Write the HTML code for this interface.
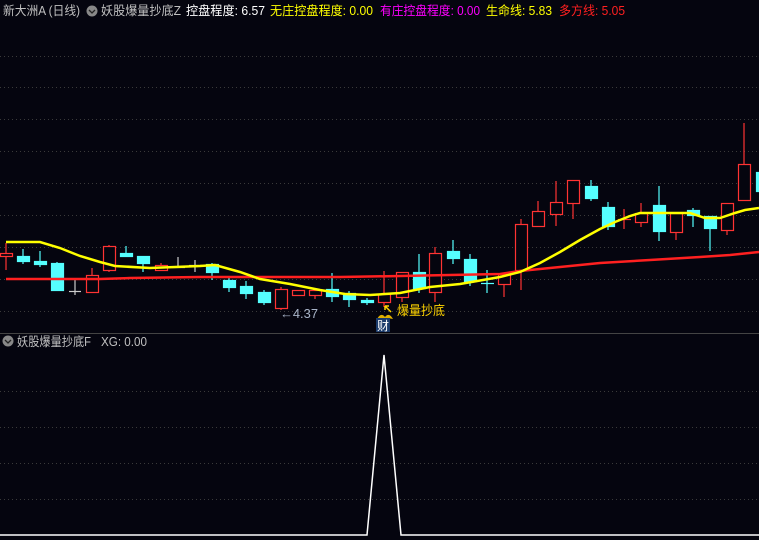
<!DOCTYPE html>
<html><head><meta charset="utf-8"><style>
body{margin:0;background:#05050f;width:759px;height:540px;overflow:hidden;font-family:"Liberation Sans","Noto Sans CJK SC",sans-serif}
svg{display:block}
</style></head><body>
<svg width="759" height="540" xmlns="http://www.w3.org/2000/svg" font-family="Liberation Sans, Noto Sans CJK SC, sans-serif">
<rect width="759" height="540" fill="#05050f"/>
<g stroke="#3a3a3a" stroke-dasharray="1 3" stroke-width="1">
<line x1="0" y1="56.5" x2="759" y2="56.5"/><line x1="0" y1="87.5" x2="759" y2="87.5"/><line x1="0" y1="119.5" x2="759" y2="119.5"/><line x1="0" y1="151.5" x2="759" y2="151.5"/><line x1="0" y1="183.5" x2="759" y2="183.5"/><line x1="0" y1="215.5" x2="759" y2="215.5"/><line x1="0" y1="247.5" x2="759" y2="247.5"/><line x1="0" y1="279.5" x2="759" y2="279.5"/><line x1="0" y1="311.5" x2="759" y2="311.5"/>
<line x1="0" y1="391.5" x2="759" y2="391.5"/><line x1="0" y1="427.5" x2="759" y2="427.5"/><line x1="0" y1="463.5" x2="759" y2="463.5"/><line x1="0" y1="499.5" x2="759" y2="499.5"/>
</g>
<line x1="0" y1="333.5" x2="759" y2="333.5" stroke="#444" stroke-width="1"/>
<g stroke-width="1.2">
<g stroke="#ff3333" fill="#05050f">
<line x1="6" y1="243" x2="6" y2="270"/><rect x="0.5" y="253.5" width="12" height="3"/>
<line x1="92" y1="268" x2="92" y2="292"/><rect x="86.5" y="275.5" width="12" height="17"/>
<line x1="109" y1="245" x2="109" y2="272"/><rect x="103.5" y="246.5" width="12" height="24"/>
<line x1="161" y1="263" x2="161" y2="271"/><rect x="155.5" y="265.5" width="12" height="5"/>
<line x1="281" y1="287" x2="281" y2="310"/><rect x="275.5" y="289.5" width="12" height="19"/>
<rect x="292.5" y="290.5" width="12" height="5"/>
<line x1="315" y1="290" x2="315" y2="299"/><rect x="309.5" y="290.5" width="12" height="5"/>
<line x1="384" y1="271" x2="384" y2="307"/><rect x="378.5" y="294.5" width="12" height="8"/>
<line x1="402" y1="272" x2="402" y2="302"/><rect x="396.5" y="272.5" width="12" height="25"/>
<line x1="435" y1="247" x2="435" y2="302"/><rect x="429.5" y="253.5" width="12" height="39"/>
<line x1="504" y1="274" x2="504" y2="297"/><rect x="498.5" y="274.5" width="12" height="10"/>
<line x1="521" y1="219" x2="521" y2="290"/><rect x="515.5" y="224.5" width="12" height="46"/>
<line x1="538" y1="201" x2="538" y2="226"/><rect x="532.5" y="211.5" width="12" height="15"/>
<line x1="556" y1="181" x2="556" y2="226"/><rect x="550.5" y="202.5" width="12" height="12"/>
<line x1="573" y1="180" x2="573" y2="219"/><rect x="567.5" y="180.5" width="12" height="23"/>
<line x1="624" y1="209" x2="624" y2="229"/><line x1="618" y1="219.5" x2="631" y2="219.5"/>
<line x1="641" y1="203" x2="641" y2="227"/><rect x="635.5" y="213.5" width="12" height="9"/>
<line x1="676" y1="213" x2="676" y2="240"/><rect x="670.5" y="213.5" width="12" height="19"/>
<line x1="727" y1="203" x2="727" y2="235"/><rect x="721.5" y="203.5" width="12" height="27"/>
<line x1="744" y1="123" x2="744" y2="200"/><rect x="738.5" y="164.5" width="12" height="36"/>
</g>
<g stroke="#55ffff" fill="#55ffff">
<line x1="23" y1="249" x2="23" y2="264"/><rect x="17.5" y="256.5" width="12" height="5"/>
<line x1="40" y1="251" x2="40" y2="267"/><rect x="34.5" y="261.5" width="12" height="3"/>
<line x1="57" y1="262" x2="57" y2="291"/><rect x="51.5" y="263.5" width="12" height="27"/>
<line x1="126" y1="246" x2="126" y2="257"/><rect x="120.5" y="253.5" width="12" height="3"/>
<line x1="143" y1="256" x2="143" y2="272"/><rect x="137.5" y="256.5" width="12" height="7"/>
<line x1="212" y1="263" x2="212" y2="280"/><rect x="206.5" y="264.5" width="12" height="8"/>
<line x1="229" y1="276" x2="229" y2="292"/><rect x="223.5" y="280.5" width="12" height="7"/>
<line x1="246" y1="281" x2="246" y2="299"/><rect x="240.5" y="286.5" width="12" height="7"/>
<line x1="264" y1="290" x2="264" y2="305"/><rect x="258.5" y="292.5" width="12" height="10"/>
<line x1="332" y1="273" x2="332" y2="302"/><rect x="326.5" y="289.5" width="12" height="7"/>
<line x1="349" y1="291" x2="349" y2="307"/><rect x="343.5" y="293.5" width="12" height="6"/>
<line x1="367" y1="298" x2="367" y2="305"/><rect x="361.5" y="300.5" width="12" height="2"/>
<line x1="419" y1="254" x2="419" y2="293"/><rect x="413.5" y="272.5" width="12" height="16"/>
<line x1="453" y1="240" x2="453" y2="264"/><rect x="447.5" y="251.5" width="12" height="7"/>
<line x1="470" y1="254" x2="470" y2="286"/><rect x="464.5" y="259.5" width="12" height="22"/>
<line x1="487" y1="270" x2="487" y2="293"/><line x1="481" y1="283.5" x2="494" y2="283.5"/>
<line x1="591" y1="180" x2="591" y2="201"/><rect x="585.5" y="186.5" width="12" height="12"/>
<line x1="608" y1="202" x2="608" y2="230"/><rect x="602.5" y="207.5" width="12" height="19"/>
<line x1="659" y1="186" x2="659" y2="241"/><rect x="653.5" y="205.5" width="12" height="26"/>
<line x1="693" y1="208" x2="693" y2="227"/><rect x="687.5" y="210.5" width="12" height="5"/>
<line x1="710" y1="216" x2="710" y2="251"/><rect x="704.5" y="216.5" width="12" height="12"/>
<rect x="756.5" y="172.5" width="4" height="19"/>
</g>
<g stroke="#cccccc">
<line x1="75" y1="280" x2="75" y2="295"/><line x1="69" y1="291.5" x2="81" y2="291.5"/>
<line x1="178" y1="257" x2="178" y2="268"/><line x1="172" y1="267.5" x2="185" y2="267.5"/>
<line x1="195" y1="260" x2="195" y2="272"/><line x1="189" y1="265.5" x2="202" y2="265.5"/>
</g>
</g>
<polyline fill="none" stroke="#ff2020" stroke-width="2.5" points="6,279 100,279 130,278 200,277 300,277 340,277 400,276 500,274 520,271 550,268 600,263 650,260 700,257 730,255 759,252"/>
<polyline fill="none" stroke="#ffff00" stroke-width="2.5" points="6,242 40,242 60,248 80,256 100,262 115,266 150,268 200,266 215,265 240,272 260,279 290,284 320,290 345,294 370,295 400,293 430,287 460,284 500,277 520,272 540,263 560,252 580,240 600,229 615,222 630,216 640,213 690,213 705,218 720,218 735,213 745,210 759,208"/>
<text x="280" y="318" font-size="12.5" fill="#a8b4c8" textLength="38" lengthAdjust="spacingAndGlyphs">←4.37</text>
<path d="M385 306 l6 6 M385 306 l4 0 M385 306 l0 4" stroke="#ffd400" stroke-width="1.5" fill="none"/>
<path d="M377 319 q4 -7 8 -2 q4 -5 8 2 q-8 -2 -16 0z" fill="#e0b000"/>
<text x="397" y="315" font-size="13" fill="#ffd400" textLength="48" lengthAdjust="spacingAndGlyphs">爆量抄底</text>
<rect x="376" y="318" width="14" height="14" fill="#1a3a6a"/>
<text x="377" y="330" font-size="12" fill="#fff">财</text>
<polyline fill="none" stroke="#fff" stroke-width="1.5" points="0,535 367,535 384,355 401,535 759,535"/>
<g font-size="12.5">
<text x="3" y="15" fill="#c0c0c0" textLength="77" lengthAdjust="spacingAndGlyphs">新大洲A (日线)</text>
<circle cx="92" cy="11" r="5.5" fill="#888"/><path d="M89 10 l3 3 l3 -3" stroke="#222" stroke-width="1.3" fill="none"/>
<text x="101" y="15" fill="#c0c0c0" textLength="80" lengthAdjust="spacingAndGlyphs">妖股爆量抄底Z</text>
<text x="186" y="15" fill="#ffffff" textLength="79" lengthAdjust="spacingAndGlyphs">控盘程度: 6.57</text>
<text x="270" y="15" fill="#ffff00" textLength="103" lengthAdjust="spacingAndGlyphs">无庄控盘程度: 0.00</text>
<text x="380" y="15" fill="#ff00ff" textLength="100" lengthAdjust="spacingAndGlyphs">有庄控盘程度: 0.00</text>
<text x="486" y="15" fill="#ffff00" textLength="66" lengthAdjust="spacingAndGlyphs">生命线: 5.83</text>
<text x="559" y="15" fill="#ff2020" textLength="66" lengthAdjust="spacingAndGlyphs">多方线: 5.05</text>
<circle cx="8" cy="341" r="5.5" fill="#888"/><path d="M5 340 l3 3 l3 -3" stroke="#222" stroke-width="1.3" fill="none"/>
<text x="17" y="346" fill="#c0c0c0" textLength="74" lengthAdjust="spacingAndGlyphs">妖股爆量抄底F</text>
<text x="101" y="346" fill="#c0c0c0" textLength="46" lengthAdjust="spacingAndGlyphs">XG: 0.00</text>
</g>
</svg>
</body></html>
